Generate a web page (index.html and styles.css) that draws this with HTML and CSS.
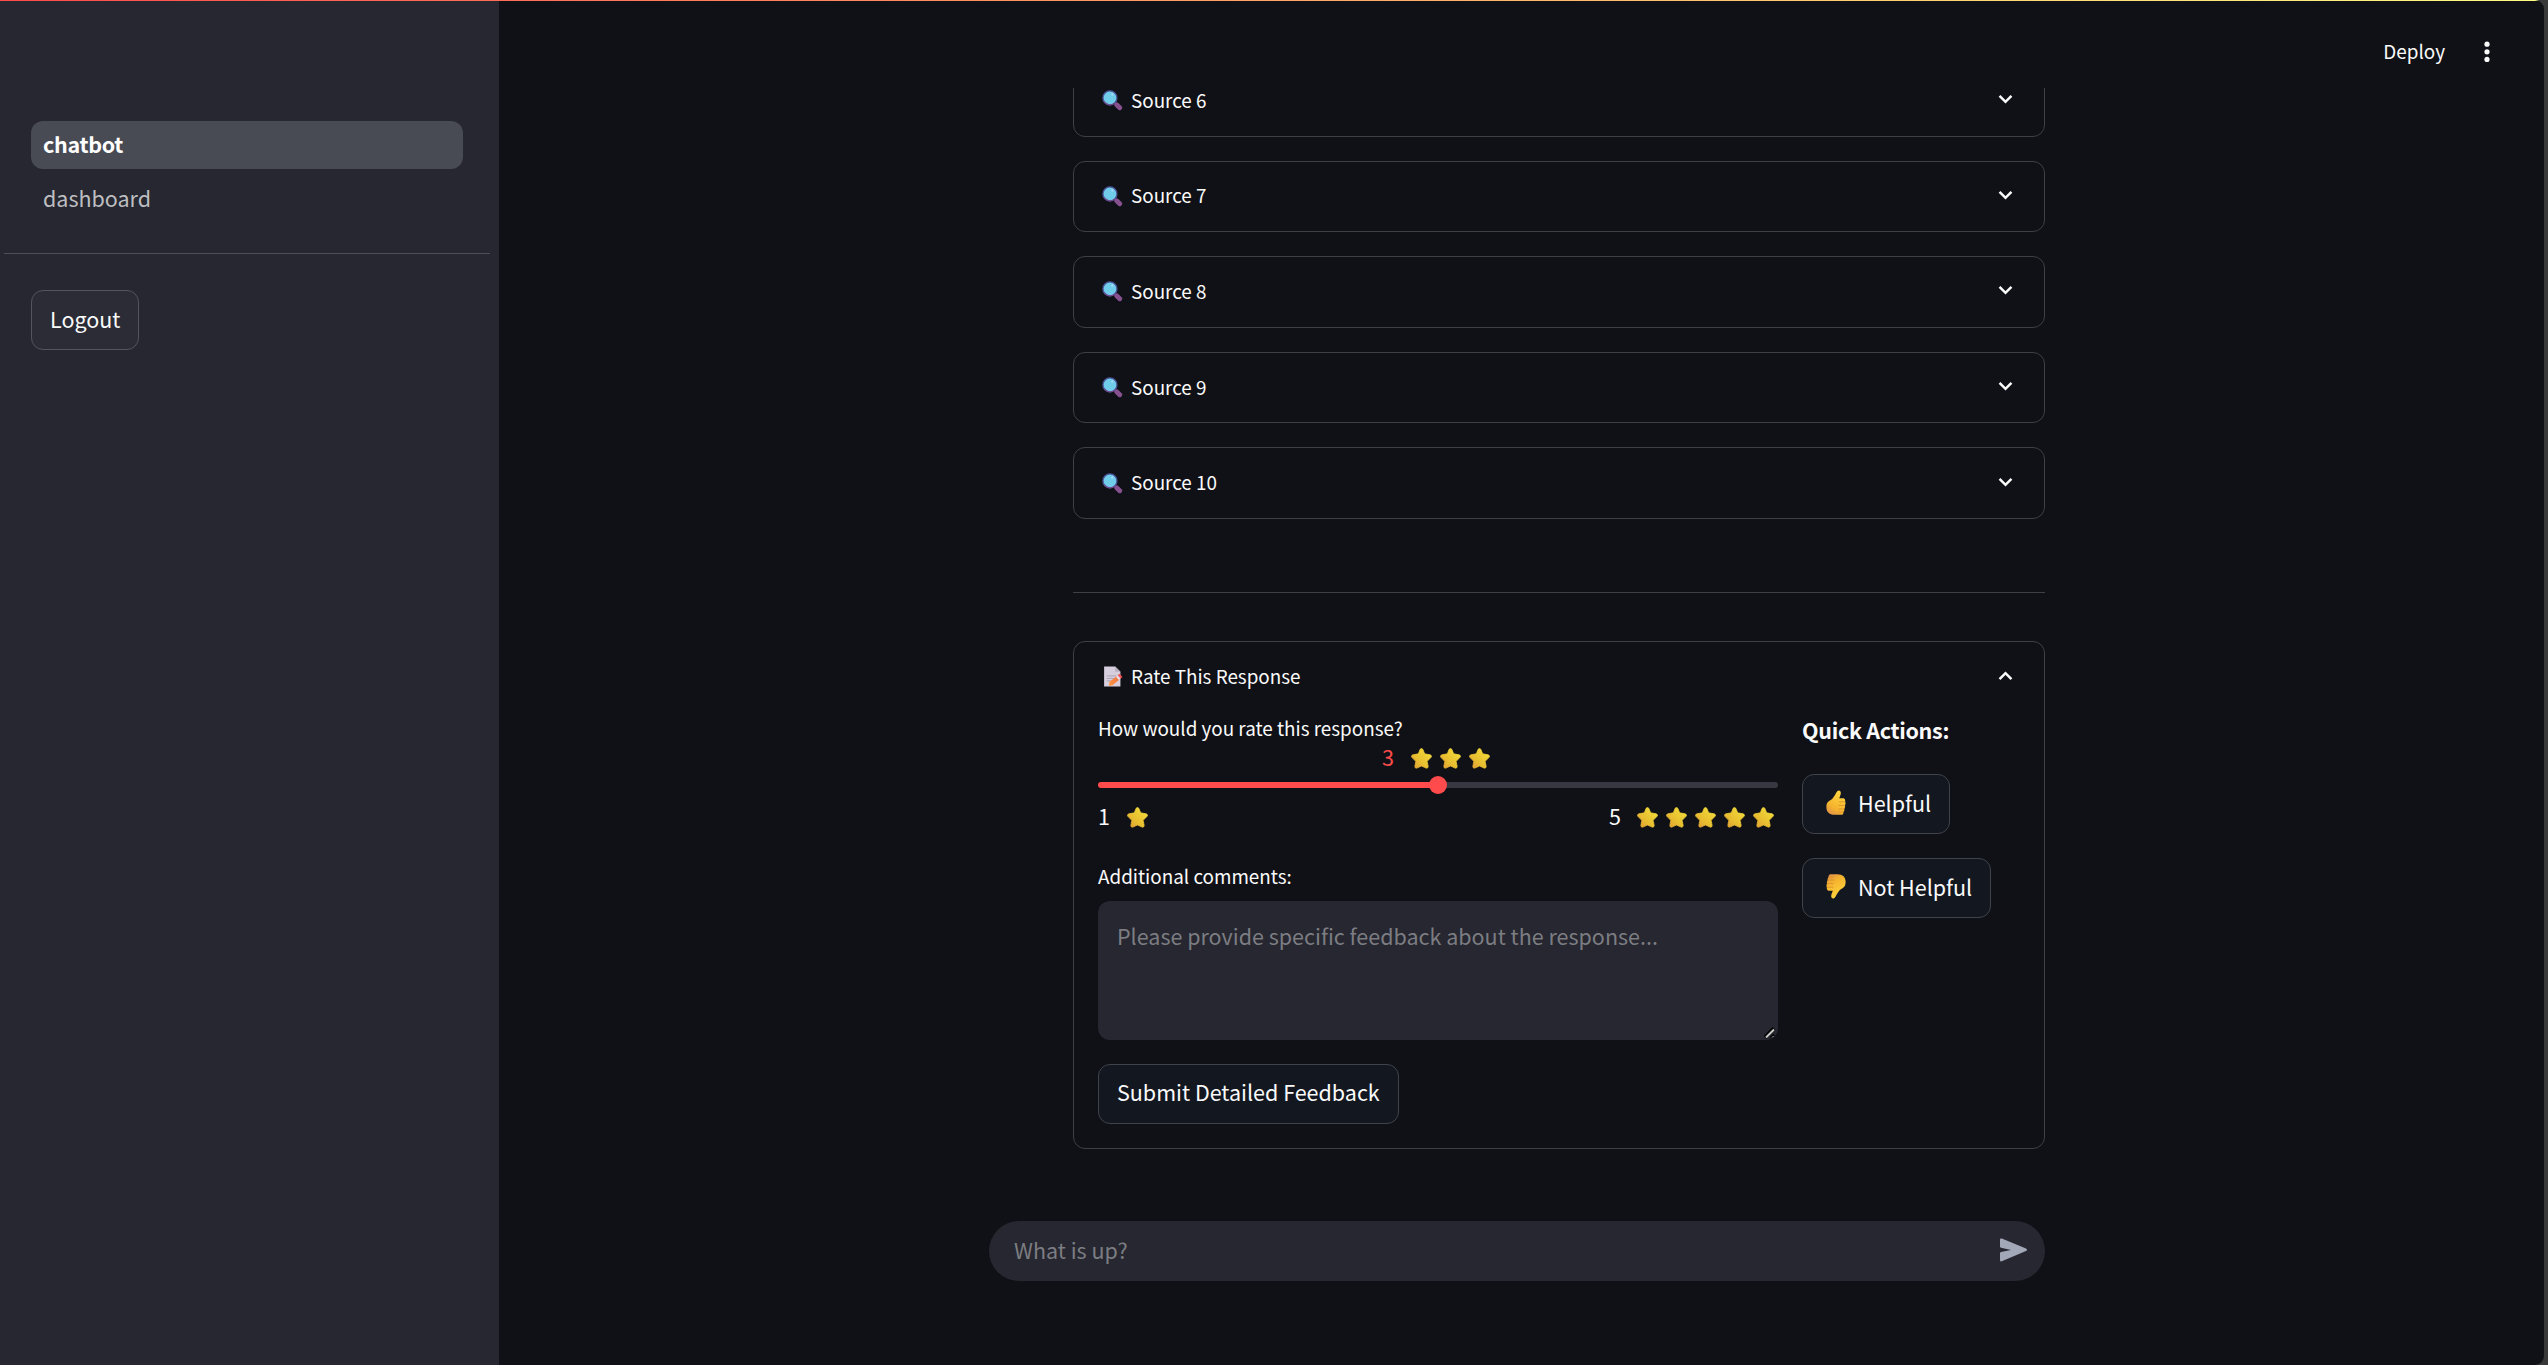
FILE: index.html
```html
<!DOCTYPE html>
<html lang="en">
<head>
<meta charset="utf-8">
<title>chatbot</title>
<link rel="stylesheet" href="styles.css">
</head>
<body>
<svg class="defs" aria-hidden="true">
  <defs>
    <linearGradient id="gold" x1="0" y1="1" x2="1" y2="0"><stop offset="0" stop-color="#e09b35"/><stop offset=".4" stop-color="#e8bf30"/><stop offset="1" stop-color="#f4e13e"/></linearGradient>
    <linearGradient id="skin" x1="0" y1="1" x2=".5" y2="0"><stop offset="0" stop-color="#db8850"/><stop offset=".4" stop-color="#f5b32e"/><stop offset="1" stop-color="#ffd43d"/></linearGradient>
    <linearGradient id="pencil" x1="0" y1="1" x2="1" y2="0"><stop offset="0" stop-color="#ff963b"/><stop offset="1" stop-color="#ee7046"/></linearGradient>
    <symbol id="star" viewBox="0 0 22 22"><path d="M9.5 1.4Q11 -.5 12.4 1.4L14.3 6.1L20 7.1Q22.5 7.9 20.8 10L16.9 14L18 19.3Q17.8 21.8 15.7 21L11 18.9L6.3 21Q4.1 21.8 4 19.3L5 14L1.1 10Q-.5 7.9 2 7.1L7.7 6.1Z" fill="url(#gold)" stroke="url(#gold)" stroke-width=".8"/></symbol>
    <symbol id="lens" viewBox="0 0 22 22"><path d="M15.4 15.4L18.6 18.6" stroke="#87508f" stroke-width="5" stroke-linecap="round"/><circle cx="8.3" cy="8.3" r="7.3" fill="#70cdea" stroke="#4e579d" stroke-width="1.4"/><path d="M2.5 12.5A7.4 7.4 0 0 0 13.5 13.5" fill="none" stroke="#754890" stroke-width="1.3"/><circle cx="10.9" cy="4.7" r="1.1" fill="#b8d9f8"/></symbol>
    <symbol id="memo" viewBox="0 0 22 22"><path d="M2.2 .5H13.8L19.3 6V21.4H2.2Z" fill="#d7cedd"/><path d="M13.8 .5V6H19.3Z" fill="#b9aec1"/><path d="M5 10.4H15M5 13H13M5 15.6H10" stroke="#aaa1b3"/><path d="M7.2 20.8L8 16.6L16.3 9.9L19.2 13.3L11 20.2Z" fill="url(#pencil)"/><path d="M14.6 11.3L16.7 9.6L19.6 13L17.6 14.7Z" fill="#eadbe8"/><path d="M16.5 9.7L18.3 8.2L21.5 11.4L19.5 13Z" fill="#f45154"/></symbol>
    <symbol id="thumb" viewBox="0 0 20 25"><path d="M11.2 1.2Q13.2 -.4 14.5 1.5C15.5 3.4 13.8 6.4 13.2 8.2H17.5Q19.6 8.8 19.1 11.6Q20 13.3 19 15.2Q19.5 17.4 18.2 18.9Q18.7 21.4 17.3 22.1Q17.8 24.8 15.4 24.8H8.5C3.3 24.8.4 21.8.4 17.4C.4 12.8 1.4 11.8 5.1 9.7C8 7.8 10.1 2.4 11.2 1.2Z" fill="url(#skin)"/><path d="M18.8 11.8H13.3M18.7 15.4H12.8M18.1 19H12.5M17.2 22H12.8" stroke="#db912c" stroke-width=".9" stroke-linecap="round"/></symbol>
    <symbol id="thumb-down" viewBox="0 0 20 25"><g transform="matrix(1 0 0 -1 0 25)"><path d="M8.8 1.2Q6.8 -.4 5.5 1.5C4.5 3.4 6.2 6.4 6.8 8.2H2.5Q.4 8.8.9 11.6Q0 13.3 1 15.2Q.5 17.4 1.8 18.9Q1.3 21.4 2.7 22.1Q2.2 24.8 4.6 24.8H11.5C16.7 24.8 19.6 21.8 19.6 17.4C19.6 12.8 18.6 11.8 14.9 9.7C12 7.8 9.9 2.4 8.8 1.2Z" fill="url(#skin)"/><path d="M1.2 11.8H6.7M1.3 15.4H7.2M1.9 19H7.5M2.8 22H7.2" stroke="#db912c" stroke-width=".9" stroke-linecap="round"/></g></symbol>
    <symbol id="down" viewBox="0 0 24 24"><path d="M5.2 7.8L12 14.6L18.8 7.8" fill="none" stroke="#fafafa" stroke-width="2.9"/></symbol>
  </defs>
</svg>
<div class="app">
  <div class="decoration"></div>
  <aside class="sidebar">
    <nav class="nav">
      <a class="nav-link active">chatbot</a>
      <a class="nav-link">dashboard</a>
    </nav>
    <hr class="side-rule">
    <button class="button logout">Logout</button>
  </aside>
  <main class="main">
    <header class="toolbar">
      <span class="deploy">Deploy</span>
      <svg class="dots" viewBox="0 0 6 22"><circle cx="3" cy="3.2" r="2.6"/><circle cx="3" cy="10.8" r="2.6"/><circle cx="3" cy="18.4" r="2.6"/></svg>
    </header>
    <section class="scroll">
      <div class="sources">
        <div class="expander"><div class="summary"><svg class="emoji"><use href="#lens"/></svg><span>Source 6</span><svg class="chevron"><use href="#down"/></svg></div></div>
        <div class="expander"><div class="summary"><svg class="emoji"><use href="#lens"/></svg><span>Source 7</span><svg class="chevron"><use href="#down"/></svg></div></div>
        <div class="expander"><div class="summary"><svg class="emoji"><use href="#lens"/></svg><span>Source 8</span><svg class="chevron"><use href="#down"/></svg></div></div>
        <div class="expander"><div class="summary"><svg class="emoji"><use href="#lens"/></svg><span>Source 9</span><svg class="chevron"><use href="#down"/></svg></div></div>
        <div class="expander"><div class="summary"><svg class="emoji"><use href="#lens"/></svg><span>Source 10</span><svg class="chevron"><use href="#down"/></svg></div></div>
      </div>
      <hr class="rule">
      <div class="expander rating">
        <div class="summary"><svg class="emoji"><use href="#memo"/></svg><span>Rate This Response</span><svg class="chevron up"><use href="#down"/></svg></div>
        <div class="columns">
          <div class="form">
            <div class="label">How would you rate this response?</div>
            <div class="slider">
              <div class="value"><span class="num">3</span><svg class="star"><use href="#star"/></svg><svg class="star"><use href="#star"/></svg><svg class="star"><use href="#star"/></svg></div>
              <div class="track"><div class="knob"></div></div>
              <div class="ticks">
                <div class="tick"><span class="num">1</span><svg class="star"><use href="#star"/></svg></div>
                <div class="tick last"><span class="num">5</span><svg class="star"><use href="#star"/></svg><svg class="star"><use href="#star"/></svg><svg class="star"><use href="#star"/></svg><svg class="star"><use href="#star"/></svg><svg class="star"><use href="#star"/></svg></div>
              </div>
            </div>
            <div class="label comments">Additional comments:</div>
            <div class="textarea"><span>Please provide specific feedback about the response...</span>
              <svg class="grip" viewBox="0 0 12 12"><path d="M1 10.5L10 1.5" stroke="#000" stroke-width="4"/><path d="M2 10.5L10 2.5" stroke="#c9c9c9" stroke-width="2"/><path d="M6.5 11L10 7.5" stroke="#000" stroke-width="2"/><path d="M8 10.5L9.5 9" stroke="#bbb"/></svg>
            </div>
            <button class="button submit">Submit Detailed Feedback</button>
          </div>
          <div class="actions">
            <div class="heading">Quick Actions:</div>
            <button class="button helpful"><svg class="thumb"><use href="#thumb"/></svg>Helpful</button>
            <button class="button unhelpful"><svg class="thumb"><use href="#thumb-down"/></svg>Not Helpful</button>
          </div>
        </div>
      </div>
    </section>
    <div class="chat"><span>What is up?</span><svg class="send" viewBox="0 0 27 24"><path d="M0 1.8Q0 0 1.8 .6L26 10.6Q28 12 26 13.1L1.8 23.2Q0 24 0 22V15.2Q0 14.4 1 14.1L11 12L1 9.7Q0 9.4 0 8.7Z" fill="#a3a8b8"/></svg></div>
  </main>
</div>
</body>
</html>
```
FILE: styles.css
```css
* { box-sizing: border-box; }

body {
  margin: 0;
  height: 1365px;
  padding-right: 4px;
  overflow: hidden;
  background: #393939;
  color: #fafafa;
  font-family: "Noto Sans CJK SC", "Open Sans", sans-serif;
  font-size: 21.5px;
}

.defs { position: absolute; width: 0; height: 0; }

.app {
  position: relative;
  display: flex;
  height: 1365px;
  overflow: hidden;
  background: #101116;
  border-radius: 0 9px 9px 0;
}

.decoration {
  position: absolute;
  inset: 0 0 auto;
  height: 1px;
  background: linear-gradient(90deg, #ff4b4b, #fffd80);
}

.sidebar {
  flex: none;
  width: 499px;
  padding-top: 121px;
  background: #262730;
}

.nav {
  display: flex;
  flex-direction: column;
  gap: 6px;
  width: 432px;
  margin-left: 31px;
}

.nav-link {
  height: 48px;
  padding-left: 12px;
  border-radius: 12px;
  color: #bebec1;
  line-height: 46px;
}

.nav-link.active {
  background: #484a54;
  color: #fff;
  font-weight: 700;
  letter-spacing: -.3px;
}

.side-rule {
  width: 486px;
  height: 1px;
  margin: 30px 0 36px 4px;
  border: 0;
  background: #4d4e56;
}

.button {
  display: flex;
  align-items: center;
  height: 60px;
  padding: 0 0 3px 18px;
  border: 1px solid #41434a;
  border-radius: 12px;
  background: #131720;
  color: #fafafa;
  font: inherit;
  white-space: nowrap;
}

.logout {
  width: 108px;
  margin-left: 31px;
  background: #2b2c36;
  border-color: #53545d;
}

.main {
  display: flex;
  flex: 1;
  flex-direction: column;
}

.toolbar {
  display: flex;
  flex: none;
  align-items: center;
  justify-content: flex-end;
  gap: 39px;
  height: 88px;
  padding: 16px 54px 0 0;
  font-size: 18.9px;
}

.deploy { line-height: 30px; margin-bottom: 3px; }
.dots { width: 6px; height: 22px; margin-bottom: 1px; fill: #fafafa; }

.scroll {
  flex: none;
  width: 972px;
  height: 1133px;
  margin-left: 574px;
  overflow: hidden;
}

.sources {
  display: flex;
  flex-direction: column;
  gap: 24px;
  margin-top: -23px;
}

.expander {
  border: 1px solid #3f4044;
  border-radius: 12px;
  font-size: 18.85px;
}

.summary {
  display: flex;
  align-items: center;
  height: 69.6px;
  padding: 0 28.4px 2px 28px;
}

.summary span { margin-left: 8px; line-height: 22px; }
.emoji { width: 21px; height: 21px; margin-top: 2px; }
.chevron { width: 21px; height: 21px; margin-left: auto; }
.up { transform: rotate(180deg); }

.rule {
  height: 1px;
  margin: 73px 0 48px;
  border: 0;
  background: #3f4044;
}

.rating { height: 508px; }

.columns {
  display: flex;
  gap: 24px;
  padding-left: 24px;
}

.form { width: 680px; }

.label { height: 30px; line-height: 30px; margin-top: 1.4px; }

.slider { height: 119px; font-size: 21.5px; }

.value, .tick {
  display: flex;
  align-items: center;
  gap: 8px;
  height: 30px;
}

.num { width: 12px; margin-right: 9px; line-height: 30px; }
.last .num { margin-right: 8px; }

.value {
  width: fit-content;
  margin-top: -1px;
  margin-left: 284px;
  color: #ff4b4b;
}

.star { width: 21px; height: 21px; margin-top: 4px; }

.track {
  display: flex;
  align-items: center;
  height: 6px;
  margin-top: 10px;
  border-radius: 3px;
  background: linear-gradient(90deg, #ff4b4b 50%, #373841 50%);
}

.knob {
  flex: none;
  width: 18px;
  height: 18px;
  margin-left: 331px;
  border-radius: 50%;
  background: #ff4b4b;
}

.ticks {
  display: flex;
  justify-content: space-between;
  padding: 13px 4px 0 0;
}

.comments { margin-top: 0; }

.textarea {
  position: relative;
  height: 139px;
  margin: 10px 0 24px;
  padding: 20px 19px;
  border-radius: 12px;
  background: #262730;
  color: #7c7d82;
  font-size: 21.5px;
  line-height: 30px;
}

.grip {
  position: absolute;
  right: 2px;
  bottom: 1px;
  width: 12px;
  height: 12px;
}

.submit { width: 301px; padding-bottom: 4px; font-size: 21.5px; }

.actions { font-size: 21.5px; }
.heading { height: 36px; margin-bottom: 26px; font-weight: 700; line-height: 35px; letter-spacing: -.3px; }
.helpful { width: 148px; margin-bottom: 24px; }
.unhelpful { width: 189px; }
.thumb { width: 20px; height: 25px; margin: 0 12px 0 5px; }

.chat {
  display: flex;
  align-items: center;
  justify-content: space-between;
  width: 1056px;
  height: 60px;
  margin-left: 490px;
  padding: 0 18px 3px 25px;
  border-radius: 30px;
  background: #262730;
  color: #7c7d82;
}

.send { width: 27px; height: 24px; }
```
